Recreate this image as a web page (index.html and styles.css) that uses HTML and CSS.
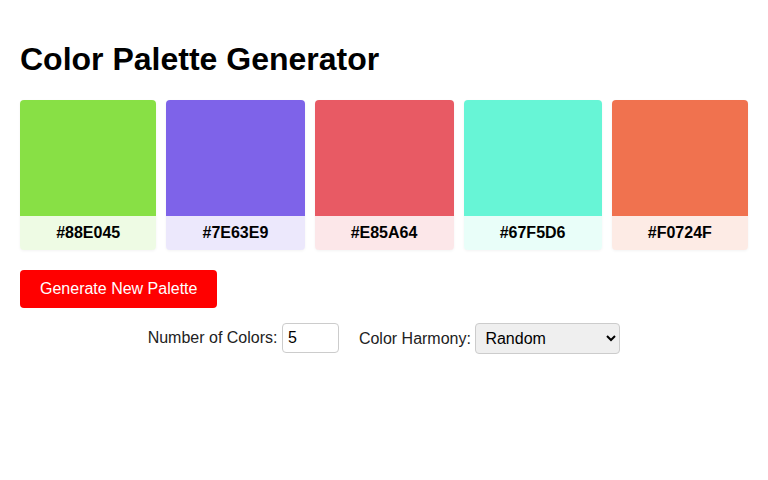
FILE: index.html
```html
<!DOCTYPE html>
<html lang="en">
<head>
    <meta charset="UTF-8">
    <meta name="viewport" content="width=device-width, initial-scale=1.0">
    <title>Color Palette Generator</title>
    <link rel="stylesheet" href="styles.css">
</head>
<body>
    <h1>Color Palette Generator</h1>

    <div class="palette" id="palette">
        <div class="color-card">
            <div class="swatch" style="background-color: #88E045;"></div>
            <div class="hex" style="background-color: #88E04525;">#88E045</div>
        </div>
        <div class="color-card">
            <div class="swatch" style="background-color: #7E63E9;"></div>
            <div class="hex" style="background-color: #7E63E925;">#7E63E9</div>
        </div>
        <div class="color-card">
            <div class="swatch" style="background-color: #E85A64;"></div>
            <div class="hex" style="background-color: #E85A6425;">#E85A64</div>
        </div>
        <div class="color-card">
            <div class="swatch" style="background-color: #67F5D6;"></div>
            <div class="hex" style="background-color: #67F5D625;">#67F5D6</div>
        </div>
        <div class="color-card">
            <div class="swatch" style="background-color: #F0724F;"></div>
            <div class="hex" style="background-color: #F0724F25;">#F0724F</div>
        </div>
    </div>

    <button id="generateBtn">Generate New Palette</button>

    <div class="controls">
        <label for="colorCount">Number of Colors:
            <input type="number" id="colorCount" value="5" min="2" max="10">
        </label>
        <label for="harmony">Color Harmony:
            <select id="harmony">
                <option value="random">Random</option>
                <option value="analogous">Analogous</option>
                <option value="complementary">Complementary</option>
                <option value="triadic">Triadic</option>
            </select>
        </label>
    </div>
</body>
</html>
```

FILE: styles.css
```css
body {
    font-family: 'Liberation Sans', Arial, sans-serif;
    margin: 0;
    padding: 20px;
    color: #000;
    background-color: #fff;
}

h1 {
    font-size: 32px;
}

.palette {
    display: flex;
    gap: 10px;
    margin-bottom: 20px;
}

.color-card {
    flex: 1 1 auto;
    border-radius: 4px;
    overflow: hidden;
    box-shadow: 0 1px 3px rgba(0, 0, 0, 0.05);
}

.swatch {
    height: 116px;
}

.hex {
    height: 34px;
    line-height: 34px;
    text-align: center;
    font-weight: bold;
    font-size: 16px;
}

button {
    padding: 10px 20px;
    border: none;
    border-radius: 4px;
    background-color: #ff0000;
    color: white;
    font-family: inherit;
    font-size: 16px;
    cursor: pointer;
}

.controls {
    display: flex;
    justify-content: center;
    align-items: center;
    gap: 20px;
    margin-top: 15px;
}

.controls label {
    font-size: 16px;
    color: #222;
}

.controls input,
.controls select {
    font-family: inherit;
    font-size: 16px;
    padding: 5px;
    border: 1px solid #ccc;
    border-radius: 4px;
}

.controls input {
    width: 45px;
}

.controls select {
    width: 145px;
    background-color: #efefef;
    color: #000;
}
```
